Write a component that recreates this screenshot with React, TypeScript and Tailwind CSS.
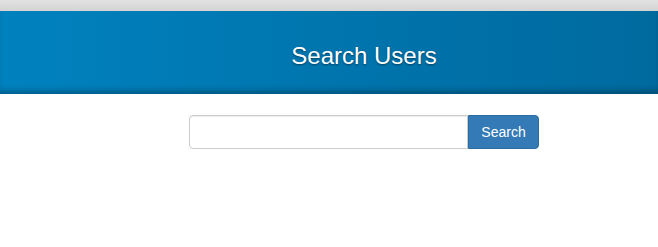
export default function App() {
  return (
    <div className="min-h-[247px] w-full bg-white font-['Liberation_Sans',Arial,sans-serif]">
      {/* browser chrome strip */}
      <div className="h-[11px] bg-gradient-to-b from-[#e2e2e2] to-[#d3d3d3]" />

      {/* header */}
      <div className="relative h-[83px] bg-gradient-to-r from-[#0082bf] via-[#0075ae] to-[#006a9e] shadow-[inset_0_-6px_6px_-3px_rgba(0,0,0,0.3)]">
        <div className="flex h-full items-center justify-center pl-[70px] pt-[7px]">
          <h1 className="text-[24px] leading-none text-white [text-shadow:0_1px_2px_rgba(0,0,0,0.45)]">
            Search Users
          </h1>
        </div>
      </div>

      {/* search form */}
      <div className="flex justify-center pl-[70px] pt-[21px]">
        <div className="flex w-[350px]">
          <input
            type="text"
            className="h-[34px] flex-1 rounded-l-[4px] border border-[#cccccc] px-3 text-[14px] text-[#555] shadow-[inset_0_1px_1px_rgba(0,0,0,0.075)] outline-none"
          />
          <button className="h-[34px] w-[71px] rounded-r-[4px] border border-[#2e6da4] bg-[#337ab7] text-[14px] text-white">
            Search
          </button>
        </div>
      </div>
    </div>
  )
}
